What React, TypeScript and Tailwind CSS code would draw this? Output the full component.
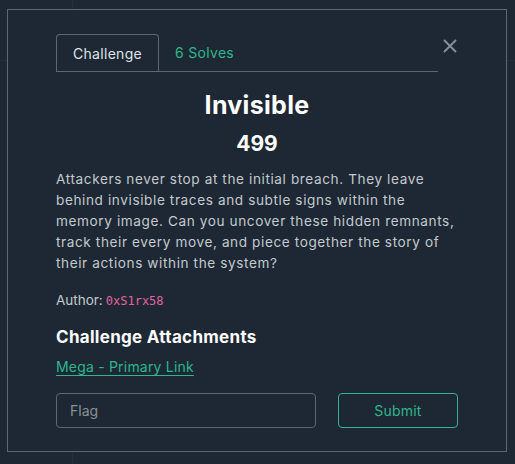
import React, { useState } from 'react';

const FONT = { fontFamily: '"Inter", "Liberation Sans", sans-serif' };

const App: React.FC = () => {
  const [flag, setFlag] = useState('');

  return (
    <div className="relative h-[464px] w-[515px] overflow-hidden bg-[#1d2834]" style={FONT}>
      {/* faint page grid behind the modal */}
      <div className="absolute left-0 top-[60px] h-px w-full bg-[#223040]" />
      <div className="absolute left-[72px] top-0 h-full w-px bg-[#223040]" />

      <div className="absolute left-[7px] top-[9px] h-[443px] w-[500px] border border-[#5d6672] bg-[#1d2834] px-12 pt-6">
        {/* tabs */}
        <div className="flex items-start">
          <div className="flex flex-1 items-end border-b border-[#5d6672]">
            <div className="-mb-px rounded-t-[4px] border border-b-0 border-[#5d6672] px-4 py-[9px] text-[14px] leading-[19px] tracking-[0.3px] text-[#dfe3e7]">
              Challenge
            </div>
            <div className="px-4 py-[9px] text-[14px] leading-[19px] tracking-[0.3px] text-[#2fb68b]">
              6 Solves
            </div>
          </div>
          <button className="mt-[4px] flex h-4 w-5 items-center justify-end text-[#8a9098]">
            <svg width="16" height="16" viewBox="0 0 16 16" fill="none" stroke="currentColor" strokeWidth="1.8">
              <path d="M2 2 L14 14 M14 2 L2 14" />
            </svg>
          </button>
        </div>

        <h1 className="mt-[18px] text-center text-[25px] font-bold leading-[30px] tracking-[0.3px] text-white">Invisible</h1>
        <div className="mt-[11px] text-center text-[21px] font-bold leading-[26px] text-white">499</div>

        <p className="mt-[12px] text-[13.6px] leading-[21px] tracking-[0.6px] text-[#c4c9ce]">
          Attackers never stop at the initial breach. They leave behind invisible traces and subtle signs within the
          memory image. Can you uncover these hidden remnants, track their every move, and piece together the story of
          their actions within the system?
        </p>

        <div className="mt-[17px] flex items-baseline gap-[3px] text-[13.5px] leading-[18px] text-[#c4c9ce]">
          <span>Author:</span>
          <span className="text-[12px] text-[#e064a0]" style={{ fontFamily: '"DejaVu Sans Mono", monospace' }}>0xS1rx58</span>
        </div>

        <h2 className="mt-[16px] text-[17px] font-bold leading-[22px] tracking-[0.3px] text-white">Challenge Attachments</h2>

        <a href="#" className="mt-[9px] inline-block text-[14px] leading-[19px] tracking-[0.2px] text-[#2fb68b] underline underline-offset-[3px]">
          Mega - Primary Link
        </a>

        <div className="mt-[15px] flex gap-[22px]">
          <input
            value={flag}
            onChange={e => setFlag(e.target.value)}
            placeholder="Flag"
            className="h-[35px] w-[260px] rounded-[4px] border border-[#5d6672] bg-transparent px-[13px] text-[14px] text-white outline-none placeholder:text-[#8a9098]"
          />
          <button className="h-[35px] flex-1 rounded-[4px] border border-[#2fb68b] text-[14px] tracking-[0.2px] text-[#2fb68b]">
            Submit
          </button>
        </div>
      </div>
    </div>
  );
};

export default App;
